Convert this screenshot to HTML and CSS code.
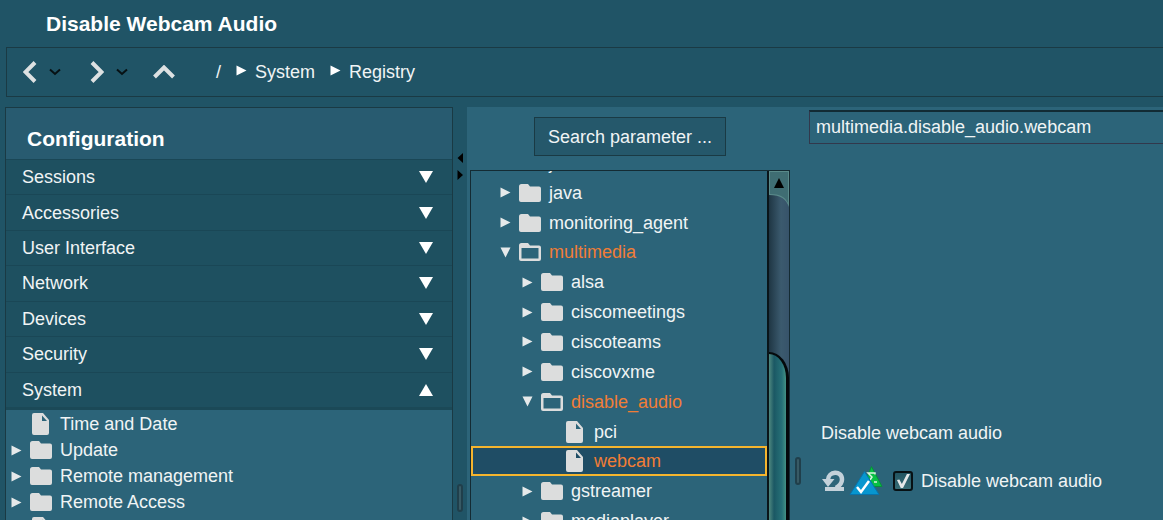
FILE: index.html
```html
<!DOCTYPE html>
<html lang="en">
<head>
<meta charset="utf-8">
<title>Disable Webcam Audio</title>
<link rel="stylesheet" href="styles.css">
</head>
<body>
<svg class="sprite" aria-hidden="true">
  <symbol id="right" viewBox="0 0 11 11"><path d="M0.5 0.5 10.5 5.5 0.5 10.5z"/></symbol>
  <symbol id="down" viewBox="0 0 11 11"><path d="M0.5 0.5h10L5.5 10.5z"/></symbol>
  <symbol id="chev-down" viewBox="0 0 14 12"><path d="M0 0h14L7 12z"/></symbol>
  <symbol id="folder" viewBox="0 0 22 18"><path d="M2.500 0H9l2 2.500h9a2 2 0 0 1 2 2V16a2 2 0 0 1-2 2H2a2 2 0 0 1-2-2V2.500A2.500 2.500 0 0 1 2.500 0z"/></symbol>
  <symbol id="open" viewBox="0 0 22 18"><path fill-rule="evenodd" d="M2.500 0H9l2 2.500h9a2 2 0 0 1 2 2V16a2 2 0 0 1-2 2H2a2 2 0 0 1-2-2V2.500A2.500 2.500 0 0 1 2.500 0zM2.500 5v10.500h17V5z"/></symbol>
  <symbol id="file" viewBox="0 0 22 22"><path fill-rule="evenodd" d="M4 0h9l6 7v13a2 2 0 0 1-2 2H4a2 2 0 0 1-2-2V2a2 2 0 0 1 2-2zM12 2.500V8h5z"/></symbol>
</svg>

<h1 class="title">Disable Webcam Audio</h1>

<nav class="toolbar">
  <button class="nav-btn" aria-label="Back"><svg width="14" height="22" viewBox="0 0 14 22"><path d="M12 1.500 2.500 11 12 20.500"/></svg></button>
  <button class="nav-btn small" aria-label="Back history"><svg width="12" height="8" viewBox="0 0 12 8"><path d="M1 1.500 6 6l5-4.500"/></svg></button>
  <button class="nav-btn forward" aria-label="Forward"><svg width="14" height="22" viewBox="0 0 14 22"><path d="M2 1.500 11.500 11 2 20.500"/></svg></button>
  <button class="nav-btn small" aria-label="Forward history"><svg width="12" height="8" viewBox="0 0 12 8"><path d="M1 1.500 6 6l5-4.500"/></svg></button>
  <button class="nav-btn up" aria-label="Up"><svg width="22" height="14" viewBox="0 0 22 14"><path d="M1.500 12 11 2.500 20.500 12"/></svg></button>
  <ol class="crumbs">
    <li><a href="#">/</a></li>
    <li><svg class="arrow"><use href="#right"/></svg><a href="#">System</a></li>
    <li><svg class="arrow"><use href="#right"/></svg><a href="#">Registry</a></li>
  </ol>
</nav>

<main class="workspace">
  <aside class="sidebar">
    <h2 class="sidebar-title">Configuration</h2>
    <div class="accordion">
      <button class="section">Sessions<svg class="chevron"><use href="#chev-down"/></svg></button>
      <button class="section">Accessories<svg class="chevron"><use href="#chev-down"/></svg></button>
      <button class="section">User Interface<svg class="chevron"><use href="#chev-down"/></svg></button>
      <button class="section">Network<svg class="chevron"><use href="#chev-down"/></svg></button>
      <button class="section">Devices<svg class="chevron"><use href="#chev-down"/></svg></button>
      <button class="section">Security<svg class="chevron"><use href="#chev-down"/></svg></button>
      <button class="section" aria-expanded="true">System<svg class="chevron open"><use href="#chev-down"/></svg></button>
    </div>
    <ul class="side-tree">
      <li class="side-item"><span class="arrow"></span><svg class="file"><use href="#file"/></svg>Time and Date</li>
      <li class="side-item"><svg class="arrow"><use href="#right"/></svg><svg class="folder"><use href="#folder"/></svg>Update</li>
      <li class="side-item"><svg class="arrow"><use href="#right"/></svg><svg class="folder"><use href="#folder"/></svg>Remote management</li>
      <li class="side-item"><svg class="arrow"><use href="#right"/></svg><svg class="folder"><use href="#folder"/></svg>Remote Access</li>
      <li class="side-item"><span class="arrow"></span><svg class="file"><use href="#file"/></svg></li>
    </ul>
  </aside>

  <div class="splitter">
    <svg width="7" height="27" viewBox="0 0 7 27"><path d="M6 0v10L0.500 5zM0.500 17v10L6 22z"/></svg>
    <span class="grip"></span>
  </div>

  <section class="registry">
    <button class="search">Search parameter ...</button>
    <div class="tree-box">
      <div class="tree-view">
        <ul class="tree">
          <li class="node"><span class="arrow"></span><span class="folder"></span>j</li>
          <li class="node"><svg class="arrow"><use href="#right"/></svg><svg class="folder"><use href="#folder"/></svg>java</li>
          <li class="node"><svg class="arrow"><use href="#right"/></svg><svg class="folder"><use href="#folder"/></svg>monitoring_agent</li>
          <li class="node active"><svg class="arrow"><use href="#down"/></svg><svg class="folder"><use href="#open"/></svg>multimedia</li>
          <li class="node l1"><svg class="arrow"><use href="#right"/></svg><svg class="folder"><use href="#folder"/></svg>alsa</li>
          <li class="node l1"><svg class="arrow"><use href="#right"/></svg><svg class="folder"><use href="#folder"/></svg>ciscomeetings</li>
          <li class="node l1"><svg class="arrow"><use href="#right"/></svg><svg class="folder"><use href="#folder"/></svg>ciscoteams</li>
          <li class="node l1"><svg class="arrow"><use href="#right"/></svg><svg class="folder"><use href="#folder"/></svg>ciscovxme</li>
          <li class="node l1 active"><svg class="arrow"><use href="#down"/></svg><svg class="folder"><use href="#open"/></svg>disable_audio</li>
          <li class="node l2"><span class="arrow"></span><svg class="file"><use href="#file"/></svg>pci</li>
          <li class="node l2 active selected"><span class="arrow"></span><svg class="file"><use href="#file"/></svg>webcam</li>
          <li class="node l1"><svg class="arrow"><use href="#right"/></svg><svg class="folder"><use href="#folder"/></svg>gstreamer</li>
          <li class="node l1"><svg class="arrow"><use href="#right"/></svg><svg class="folder"><use href="#folder"/></svg>mediaplayer</li>
        </ul>
      </div>
      <div class="scrollbar">
        <svg width="20" height="36" viewBox="0 0 20 36"><path d="M0 0h20v36C17 28 12 24 0 24z" fill="#5a8a8a"/><path d="M1 1h18v31C16 26 11 23 1 23z" fill="#3f6d73"/><path d="M10 7l5 10H5z" fill="#000"/></svg>
        <span class="track"></span>
        <span class="thumb"></span>
      </div>
    </div>
  </section>

  <div class="splitter inner"><span class="grip"></span></div>

  <section class="detail">
    <input class="path" type="text" aria-label="Parameter" value="multimedia.disable_audio.webcam">
    <div class="param">
      <h3 class="param-title">Disable webcam audio</h3>
      <div class="param-row">
        <button class="reset" aria-label="Reset"><svg width="24" height="22" viewBox="0 0 24 22"><path d="M6 10C6 1 20 0 20 9.500c0 4-2 6-6 8.500" fill="none" stroke="#c3d1da" stroke-width="4.500"/><path d="M0 9h12.500l-6.500 8z" fill="#c3d1da"/><path d="M3 17h19v4H3z" fill="#c3d1da"/></svg></button>
        <button aria-label="Parameter state"><svg width="34" height="32" viewBox="0 0 34 32"><path d="M22.500 1.500 33 21.500H14z" fill="#08bf45" stroke="#078f3a" stroke-linejoin="round"/><path d="M26 9.500V8h-7l4 4-2 3M25 17h3" fill="none" stroke="#d9f3df" stroke-width="1.500"/><path d="M15.500 6.500 30 29.500H1z" fill="#0796cf" stroke="#0873ab" stroke-linejoin="round"/><path d="M8 22l4 5 8-11" fill="none" stroke="#fff" stroke-width="2.500"/></svg></button>
        <input class="check" type="checkbox" id="disable" checked>
        <label for="disable">Disable webcam audio</label>
      </div>
    </div>
  </section>
</main>
</body>
</html>
```
FILE: styles.css
```css
* { box-sizing: border-box; }

body {
  margin: 0;
  height: 100vh;
  overflow: hidden;
  display: flex;
  flex-direction: column;
  background: #205466;
  color: #f0f4f5;
  font: 18px/20px "Liberation Sans", Arial, sans-serif;
}

button { font: inherit; color: inherit; background: none; border: 0; padding: 0; }
ul, ol { list-style: none; margin: 0; padding: 0; }
a { color: inherit; text-decoration: none; }
svg { display: block; flex: none; }
.sprite { position: absolute; width: 0; height: 0; }
.arrow { width: 11px; height: 11px; flex: none; fill: #e6e9ea; }
.folder { width: 22px; height: 18px; flex: none; fill: #dcdddd; }
.file { width: 22px; height: 22px; fill: #dcdddd; }

.title {
  margin: 0;
  padding: 12px 46px 11px;
  font-size: 21px;
  line-height: 24px;
  color: #fff;
}

.toolbar {
  display: flex;
  align-items: center;
  flex: none;
  height: 50px;
  margin-left: 6px;
  padding-left: 16px;
  border: 1px solid #1a3a44;
  border-width: 1px 0 1px 1px;
}
.nav-btn svg { fill: none; stroke: #dde1e2; stroke-width: 4; }
.nav-btn.small { margin-left: 12px; }
.nav-btn.small svg { stroke: #071114; stroke-width: 2; }
.nav-btn.forward { margin-left: 29px; }
.nav-btn.up { margin-left: 25px; }
.crumbs { display: flex; gap: 15px; margin-left: 41px; }
.crumbs li { display: flex; gap: 8px; }
.crumbs .arrow { margin-top: 3px; fill: #fff; }

.workspace { display: flex; flex: 1; min-height: 0; margin-top: 10px; }

.sidebar {
  display: flex;
  flex-direction: column;
  width: 39%;
  max-width: 448px;
  margin-left: 5px;
  overflow: hidden;
  border: 1px solid #1a3a44;
  border-bottom: 0;
  background: #2c6479;
}
.sidebar-title {
  margin: 0;
  padding: 19px 21px 8px;
  background: #285b70;
  color: #fff;
  font-size: 21px;
  line-height: 24px;
}
.accordion {
  display: grid;
  grid-template-rows: repeat(7, 1fr);
  flex: none;
  height: 251px;
  background: #1e5060;
  border-bottom: 3px solid #1b4957;
}
.section {
  display: flex;
  align-items: center;
  justify-content: space-between;
  padding: 0 19px 0 16px;
  border-top: 1px solid #1a4756;
  text-align: left;
}
.chevron { width: 14px; height: 12px; fill: #fff; }
.chevron.open { transform: rotate(180deg); }
.side-tree { padding: 1px 0 0 5px; }
.side-item { display: flex; align-items: center; gap: 8px; height: 26px; white-space: nowrap; }

.splitter {
  display: flex;
  flex-direction: column;
  align-items: center;
  justify-content: space-between;
  flex: none;
  width: 14px;
  padding: 46px 0 8px;
}
.grip {
  width: 6px;
  height: 28px;
  border: 2px solid #203f4b;
  border-radius: 3px;
  background: #385a65;
}
.splitter.inner { justify-content: flex-end; width: 16px; padding-bottom: 35px; background: #2c6479; }

.registry {
  display: flex;
  flex-direction: column;
  flex: none;
  width: 323px;
  padding: 10px 0 0 3px;
  background: #2c6479;
}
.search {
  align-self: center;
  height: 39px;
  padding: 0 13px;
  border: 1px solid #1a3a44;
  background: #25586b;
}
.tree-box {
  display: flex;
  flex: 1;
  min-height: 0;
  margin-top: 14px;
  border: 1px solid #142b33;
  border-bottom: 0;
}
.tree-view { flex: 1; overflow: hidden; }
.tree { display: grid; grid-template-rows: repeat(13, 1fr); height: 388px; margin-top: -23px; }
.node { display: flex; align-items: center; gap: 8px; padding-left: 29px; white-space: nowrap; }
.node.l1 { padding-left: 51px; }
.node.l2 { padding-left: 74px; }
.node.active { color: #f07d36; }
.node.selected { padding-left: 72px; background: #1f4d65; border: 2px solid #f5b52e; }

.scrollbar {
  display: flex;
  flex-direction: column;
  width: 22px;
  border-left: 2px solid #0a1519;
  background: linear-gradient(90deg, #1f3644, #3b5a6e 60%, #37536a);
}
.track { flex: 146; }
.thumb {
  flex: 167;
  border: 2px solid #05090b;
  border-width: 2px 3px 0 0;
  border-top-right-radius: 20px 26px;
  background: linear-gradient(90deg, #4f887f, #1b5864 30%, #267077 75%, #439184);
}

.detail {
  display: flex;
  flex-direction: column;
  flex: 1;
  min-width: 0;
  padding: 3px 0 23px 3px;
  background: #2c6479;
}
.path {
  height: 34px;
  width: 100%;
  padding: 0 6px;
  border: 1px solid #32384c;
  border-top: 2px solid #122b34;
  border-right: 0;
  background: #2c6479;
  color: inherit;
  font: inherit;
}
.param { margin-top: auto; padding-left: 12px; }
.param-title { margin: 0 0 22px; font-size: 18px; font-weight: 400; }
.param-row { display: flex; align-items: center; height: 32px; }
.param-row label { margin-left: 8px; }
.reset { margin: 0 3px 0 1px; }
.check {
  appearance: none;
  width: 20px;
  height: 20px;
  margin: 0 0 0 10px;
  border: 2px solid #071114;
  border-radius: 3px;
  background: linear-gradient(#225461, #376d76);
}
.check:checked::before {
  content: "";
  display: block;
  width: 14px;
  height: 14px;
  margin: 1px;
  background: #e4e8e8;
  clip-path: polygon(7% 42%, 24% 40%, 42% 72%, 78% 0, 100% 0, 50% 100%, 34% 100%);
}
```
